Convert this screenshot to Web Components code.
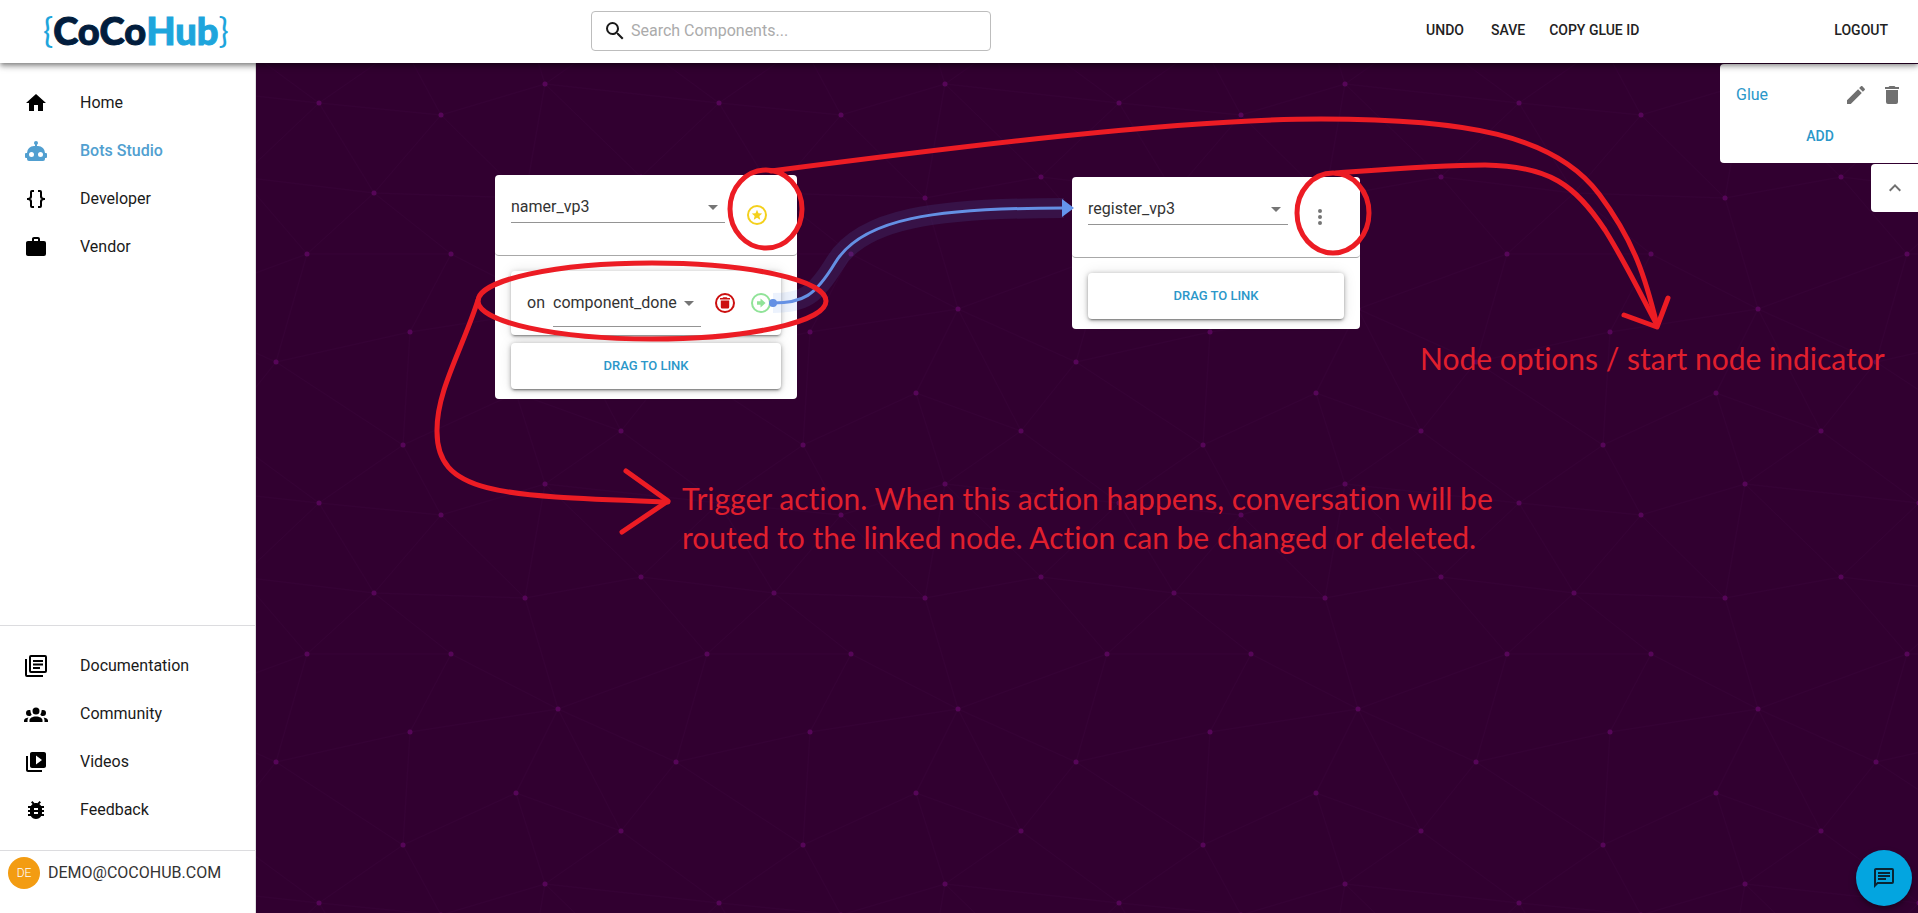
<!DOCTYPE html>
<html lang="en">
<head>
<meta charset="utf-8">
<title>CoCoHub – Bots Studio</title>
<style>
  html, body { margin: 0; }
  body { font: 16px/24px Roboto, "Liberation Sans", sans-serif; color: #222; background: #fff; }
</style>
</head>
<body>
<coco-app></coco-app>

<script>
const ICONS = {
  home: '<path d="M10 20v-6h4v6h5v-8h3L12 3 2 12h3v8z"/>',
  robot: '<path d="M12,2A2,2 0 0,1 14,4C14,4.74 13.6,5.39 13,5.73V7H14A7,7 0 0,1 21,14H22A1,1 0 0,1 23,15V18A1,1 0 0,1 22,19H21V20A2,2 0 0,1 19,22H5A2,2 0 0,1 3,20V19H2A1,1 0 0,1 1,18V15A1,1 0 0,1 2,14H3A7,7 0 0,1 10,7H11V5.73C10.4,5.39 10,4.74 10,4A2,2 0 0,1 12,2M7.5,13A2.5,2.5 0 0,0 5,15.5A2.5,2.5 0 0,0 7.5,18A2.5,2.5 0 0,0 10,15.5A2.5,2.5 0 0,0 7.5,13M16.5,13A2.5,2.5 0 0,0 14,15.5A2.5,2.5 0 0,0 16.5,18A2.5,2.5 0 0,0 19,15.5A2.5,2.5 0 0,0 16.5,13Z"/>',
  braces: '<path d="M8,3A2,2 0 0,0 6,5V9A2,2 0 0,1 4,11H3V13H4A2,2 0 0,1 6,15V19A2,2 0 0,0 8,21H10V19H8V14A2,2 0 0,0 6,12A2,2 0 0,0 8,10V5H10V3M16,3A2,2 0 0,1 18,5V9A2,2 0 0,0 20,11H21V13H20A2,2 0 0,0 18,15V19A2,2 0 0,1 16,21H14V19H16V14A2,2 0 0,1 18,12A2,2 0 0,1 16,10V5H14V3H16Z"/>',
  briefcase: '<path d="M10,2H14A2,2 0 0,1 16,4V6H20A2,2 0 0,1 22,8V19A2,2 0 0,1 20,21H4C2.89,21 2,20.1 2,19V8C2,6.89 2.89,6 4,6H8V4C8,2.89 8.89,2 10,2M14,6V4H10V6H14Z"/>',
  docs: '<g fill="none" stroke="currentColor" stroke-width="2"><rect x="6" y="2" width="16" height="16" rx="1"/><path d="M2 5V21Q2 22 3 22H19M9 7H19M9 10.500H19M9 14H16"/></g>',
  group: '<path d="M12,5.5A3.5,3.5 0 0,1 15.5,9A3.5,3.5 0 0,1 12,12.5A3.5,3.5 0 0,1 8.5,9A3.5,3.5 0 0,1 12,5.5M5,8C5.56,8 6.08,8.15 6.53,8.42C6.38,9.85 6.8,11.27 7.66,12.38C7.16,13.34 6.16,14 5,14A3,3 0 0,1 2,11A3,3 0 0,1 5,8M19,8A3,3 0 0,1 22,11A3,3 0 0,1 19,14C17.84,14 16.84,13.34 16.34,12.38C17.2,11.27 17.62,9.85 17.47,8.42C17.92,8.15 18.44,8 19,8M5.5,18.25C5.5,16.18 8.41,14.5 12,14.5C15.59,14.5 18.5,16.18 18.5,18.25V20H5.5V18.25M0,20V18.5C0,17.11 1.89,15.94 4.45,15.6C3.86,16.28 3.5,17.22 3.5,18.25V20H0M24,20H20.5V18.25C20.5,17.22 20.14,16.28 19.55,15.6C22.11,15.94 24,17.11 24,18.5V20Z"/>',
  video: '<path d="M4 6H2v14c0 1.100.9 2 2 2h14v-2H4V6zm16-4H8c-1.100 0-2 .9-2 2v12c0 1.100.9 2 2 2h12c1.100 0 2-.9 2-2V4c0-1.100-.9-2-2-2zm-8 12.500v-9l6 4.500-6 4.500z"/>',
  bug: '<path d="M20 8h-2.810c-.45-.78-1.070-1.450-1.820-1.960L17 4.410 15.590 3l-2.170 2.170C12.960 5.060 12.490 5 12 5c-.49 0-.96.06-1.410.17L8.410 3 7 4.410l1.620 1.630C7.880 6.550 7.260 7.220 6.810 8H4v2h2.090c-.05.33-.09.66-.09 1v1H4v2h2v1c0 .34.04.67.09 1H4v2h2.810c1.040 1.790 2.970 3 5.190 3s4.150-1.210 5.190-3H20v-2h-2.090c.05-.33.09-.66.09-1v-1h2v-2h-2v-1c0-.34-.04-.67-.09-1H20V8zm-6 8h-4v-2h4v2zm0-4h-4v-2h4v2z"/>',
  search: '<path d="M9.5,3A6.5,6.5 0 0,1 16,9.5C16,11.11 15.41,12.59 14.44,13.73L14.71,14H15.5L20.5,19L19,20.5L14,15.5V14.71L13.73,14.44C12.59,15.41 11.11,16 9.5,16A6.5,6.5 0 0,1 3,9.5A6.5,6.5 0 0,1 9.5,3M9.5,5C7,5 5,7 5,9.5C5,12 7,14 9.5,14C12,14 14,12 14,9.5C14,7 12,5 9.5,5Z"/>',
  pencil: '<path d="M20.71,7.04C21.1,6.65 21.1,6 20.71,5.63L18.37,3.29C18,2.9 17.35,2.9 16.96,3.29L15.12,5.12L18.87,8.87M3,17.25V21H6.75L17.81,9.93L14.06,6.18L3,17.25Z"/>',
  trash: '<path d="M19,4H15.5L14.5,3H9.5L8.5,4H5V6H19M6,19A2,2 0 0,0 8,21H16A2,2 0 0,0 18,19V7H6V19Z"/>',
  up: '<path d="M7.41,15.41L12,10.83L16.59,15.41L18,14L12,8L6,14L7.41,15.41Z"/>',
  dots: '<path d="M12,16A2,2 0 0,1 14,18A2,2 0 0,1 12,20A2,2 0 0,1 10,18A2,2 0 0,1 12,16M12,10A2,2 0 0,1 14,12A2,2 0 0,1 12,14A2,2 0 0,1 10,12A2,2 0 0,1 12,10M12,4A2,2 0 0,1 14,6A2,2 0 0,1 12,8A2,2 0 0,1 10,6A2,2 0 0,1 12,4Z"/>',
  star: '<circle cx="12" cy="12" r="9" fill="none" stroke="currentColor" stroke-width="2"/><path d="M12 6.800L13.500 10.300 17.200 10.600 14.400 13.100 15.200 16.700 12 14.800 8.800 16.700 9.600 13.100 6.800 10.600 10.500 10.300Z"/>',
  remove: '<circle cx="12" cy="12" r="9" fill="none" stroke="currentColor" stroke-width="2"/><path d="M7 7H9.500L10.300 6.200H13.700L14.500 7H17V8.600H7ZM7.800 9.400H16.200V16Q16.200 17.600 14.800 17.600H9.200Q7.800 17.600 7.800 16Z"/>',
  go: '<circle cx="12" cy="12" r="9" fill="none" stroke="currentColor" stroke-width="2"/><path d="M8 10.200H11.500V7.400L16.600 12 11.500 16.600V13.800H8Z"/>',
  caret: '<path d="M7 10l5 5 5-5z"/>',
  chat: '<path d="M20,2A2,2 0 0,1 22,4V16A2,2 0 0,1 20,18H6L2,22V4C2,2.89 2.9,2 4,2H20M4,4V17.17L5.17,16H20V4H4M6,6H18V8H6V6M6,9H18V11H6V9M6,12H14V14H6V12Z"/>'
};

function define(name, render) {
  customElements.define(name, class extends HTMLElement {
    connectedCallback() {
      if (this.shadowRoot) return;
      this.attachShadow({ mode: 'open' }).innerHTML = render(this);
    }
  });
}

define('coco-icon', el => `
  <style>
    :host { display: block; width: 24px; height: 24px; flex: none; }
    svg { display: block; width: 100%; height: 100%; fill: currentColor; }
  </style>
  <svg viewBox="0 0 24 24" aria-hidden="true">${ICONS[el.getAttribute('name')]}</svg>`);

define('coco-logo', () => `
  <style>
    :host { display: block; }
    a { display: flex; align-items: center; text-decoration: none; color: #021d3d;
        font: 900 38px/46px Lato, "Open Sans", sans-serif; -webkit-text-stroke: 1px currentColor; }
    .hub, .brace { color: #1ea5dc; }
    .brace { font-weight: 400; font-size: 34px; -webkit-text-stroke: 0; }
  </style>
  <a href="#"><span class="brace">{</span><span>CoCo</span><span class="hub">Hub</span><span class="brace">}</span></a>`);

define('coco-search', () => `
  <style>
    :host { display: block; }
    label { display: flex; align-items: center; gap: 4px; height: 40px; box-sizing: border-box;
            border: 1px solid #bdbdbd; border-radius: 4px; padding: 0 11px; color: #1a1a1a; }
    input { flex: 1; min-width: 0; border: 0; outline: 0; padding: 0; background: none; font: inherit; }
    input::placeholder { color: #ababab; opacity: 1; }
  </style>
  <label><coco-icon name="search"></coco-icon>
    <input type="search" placeholder="Search Components..." aria-label="Search Components"></label>`);

define('coco-text-button', () => `
  <style>
    :host { display: block; }
    button { display: block; border: 0; background: none; padding: 0; cursor: pointer; color: inherit;
             font: 500 14px/24px Roboto, sans-serif; text-transform: uppercase; white-space: nowrap; }
  </style>
  <button type="button"><slot></slot></button>`);

define('coco-icon-button', el => `
  <style>
    :host { display: block; }
    button { display: block; border: 0; background: none; padding: 0; cursor: pointer; color: inherit; }
  </style>
  <button type="button" aria-label="${el.getAttribute('label')}"><coco-icon name="${el.getAttribute('icon')}"></coco-icon></button>`);

define('coco-header', () => `
  <style>
    :host { display: grid; grid-template-columns: 591fr 400fr 927fr; align-items: center; height: 63px;
            box-sizing: border-box; padding-bottom: 1px; background: #fff; position: relative; z-index: 3;
            box-shadow: 0 2px 4px -1px rgba(0,0,0,.3), 0 4px 5px rgba(0,0,0,.2), 0 1px 10px rgba(0,0,0,.18); }
    coco-logo { padding: 0 0 2px 43px; }
    nav { display: flex; justify-content: flex-end; padding: 0 30px 2px 0; gap: 24px; }
    .undo { margin-right: 3px; }
    .logout { margin-left: 171px; }
  </style>
  <coco-logo></coco-logo>
  <coco-search></coco-search>
  <nav>
    <coco-text-button class="undo">Undo</coco-text-button>
    <coco-text-button>Save</coco-text-button>
    <coco-text-button>Copy Glue ID</coco-text-button>
    <coco-text-button class="logout">Logout</coco-text-button>
  </nav>`);

define('coco-nav-item', el => `
  <style>
    :host { display: block; color: #000; }
    :host([active]) { color: #519fd0; font-weight: 500; }
    a { display: flex; align-items: center; gap: 32px; height: 48px; padding-left: 24px;
        color: inherit; text-decoration: none; }
    span { color: #1a1a1a; }
    :host([active]) span { color: inherit; }
  </style>
  <a href="#"><coco-icon name="${el.getAttribute('icon')}"></coco-icon><span><slot></slot></span></a>`);

define('coco-sidebar', () => `
  <style>
    :host { display: flex; flex-direction: column; background: #fff; box-sizing: border-box; border-right: 1px solid #e0e0e0; }
    nav { padding: 16px 0; }
    .foot { margin-top: auto; border-top: 1px solid #dcdcdf; }
    .user { display: flex; align-items: flex-start; gap: 8px; height: 63px; box-sizing: border-box;
            padding: 6px 8px; border-top: 1px solid #dcdcdf; color: #333; }
    .avatar { width: 32px; height: 32px; border-radius: 50%; background: #f39c12; color: #fff;
              font-size: 12px; font-weight: 300; line-height: 32px; text-align: center; }
    .mail { line-height: 32px; }
  </style>
  <nav>
    <coco-nav-item icon="home">Home</coco-nav-item>
    <coco-nav-item icon="robot" active>Bots Studio</coco-nav-item>
    <coco-nav-item icon="braces">Developer</coco-nav-item>
    <coco-nav-item icon="briefcase">Vendor</coco-nav-item>
  </nav>
  <nav class="foot">
    <coco-nav-item icon="docs">Documentation</coco-nav-item>
    <coco-nav-item icon="group">Community</coco-nav-item>
    <coco-nav-item icon="video">Videos</coco-nav-item>
    <coco-nav-item icon="bug">Feedback</coco-nav-item>
  </nav>
  <div class="user"><span class="avatar">DE</span><span class="mail">DEMO@COCOHUB.COM</span></div>`);

define('coco-select', el => `
  <style>
    :host { display: grid; align-items: center; border-bottom: 1px solid #949494; color: #333; }
    select, coco-icon { grid-area: 1 / 1; }
    select { appearance: none; width: 100%; border: 0; outline: 0; background: none; padding: 0;
             color: inherit; font: inherit; height: 30px; }
    coco-icon { justify-self: end; color: #757575; pointer-events: none; }
  </style>
  <select aria-label="${el.getAttribute('label')}"><option>${el.getAttribute('value')}</option></select>
  <coco-icon name="caret"></coco-icon>`);

define('coco-drag-button', () => `
  <style>
    :host { display: block; }
    button { display: block; width: 100%; height: 46px; border: 0; border-radius: 4px; background: #fff;
             color: #2b97c9; font: 500 13px/24px Roboto, sans-serif; text-transform: uppercase; cursor: grab;
             box-shadow: 0 3px 1px -2px rgba(0,0,0,.2), 0 2px 2px rgba(0,0,0,.14), 0 1px 5px rgba(0,0,0,.3), 0 0 14px rgba(0,0,0,.1); }
  </style>
  <button type="button">Drag to link</button>`);

define('coco-trigger', el => `
  <style>
    :host { display: flex; height: 64px; box-sizing: border-box; padding: 0 8px 0 16px; border-radius: 4px;
            background: #fff; align-items: center;
            box-shadow: 0 3px 1px -2px rgba(0,0,0,.2), 0 2px 2px rgba(0,0,0,.14), 0 1px 5px rgba(0,0,0,.2), 0 0 14px rgba(0,0,0,.1); }
    .on { width: 26px; color: #333; }
    coco-select { width: 148px; padding: 8px 0; }
    .remove { margin-left: 12px; color: #cc0f0f; }
    .go { margin-left: 12px; color: #90e398; }
  </style>
  <span class="on">on</span>
  <coco-select label="Action" value="${el.getAttribute('action')}"></coco-select>
  <coco-icon-button class="remove" icon="remove" label="Delete action"></coco-icon-button>
  <coco-icon-button class="go" icon="go" label="Linked"></coco-icon-button>`);

define('coco-node', el => `
  <style>
    :host { display: block; border-radius: 4px; background: #fff; }
    header { display: flex; align-items: flex-start; height: 81px; box-sizing: border-box; padding: 17px 28px 0 16px;
             border-bottom: 1px solid #a8a8a8; border-radius: 4px; }
    coco-select { flex: 1; }
    .opt { margin: 11px 0 0 20px; color: #757575; }
    .opt.star { color: #f4d01c; }
    .body { display: flex; flex-direction: column; gap: 8px; padding: 15px 16px 10px; }
  </style>
  <header>
    <coco-select label="Component" value="${el.getAttribute('value')}"></coco-select>
    <coco-icon-button class="opt ${el.getAttribute('icon')}" icon="${el.getAttribute('icon')}" label="Node options"></coco-icon-button>
  </header>
  <div class="body"><slot></slot><coco-drag-button></coco-drag-button></div>`);

define('coco-glue-panel', () => `
  <style>
    :host { display: flex; flex-direction: column; align-items: flex-end; gap: 1px; }
    section { width: 198px; height: 99px; box-sizing: border-box; padding: 19px 14px 0 16px; background: #fff; border-radius: 4px 0 0 4px; color: #2b97c9; }
    .row { display: flex; align-items: center; gap: 12px; }
    .row a { flex: 1; color: inherit; text-decoration: none; }
    .row coco-icon-button { color: #707070; }
    .add { display: flex; justify-content: center; padding-top: 17px; }
    .toggle { display: grid; place-items: center; width: 47px; height: 48px; background: #fff; border-radius: 4px 0 0 4px; color: #707070; }
  </style>
  <section>
    <div class="row"><a href="#">Glue</a>
      <coco-icon-button icon="pencil" label="Rename"></coco-icon-button>
      <coco-icon-button icon="trash" label="Delete"></coco-icon-button></div>
    <div class="add"><coco-text-button>Add</coco-text-button></div>
  </section>
  <div class="toggle"><coco-icon-button icon="up" label="Collapse"></coco-icon-button></div>`);

/* Faint constellation that repeats every 400px behind the nodes. */
const STARS = { A:[63,40],B:[185,52],C:[289,21],D:[118,130],E:[269,135],F:[51,191],G:[195,191],H:[154,269],
                I:[20,299],J:[260,330],K:[147,382],L:[365,368],M:[385,114],N:[302,246] };
const EDGES = ['AB','BC','AD','BD','BE','CE','FG','DF','DG','DE','GH','GN','FI','HI','HK','IK','KJ','JL','JN','HN','NE','NL','EM','CM'];
const WRAPS = [[385,114,451,191],[385,114,463,40],[385,114,518,130],[365,368,420,299],[302,246,420,299],
               [147,382,63,440],[147,382,185,452],[365,368,289,421],[365,368,463,440],[260,330,289,421],[289,21,463,40],[302,246,451,191]];
function sky() {
  let s = '';
  const line = (a, b, c, d) => { s += `<path d="M${a} ${b}L${c} ${d}"/>`; };
  EDGES.forEach(e => line(...STARS[e[0]], ...STARS[e[1]]));
  WRAPS.forEach(([a, b, c, d]) => [[0, 0], [-400, 0], [0, -400], [-400, -400]].forEach(([x, y]) => line(a + x, b + y, c + x, d + y)));
  const dots = Object.values(STARS).map(([x, y]) => `<circle cx="${x}" cy="${y}" r="2.500"/>`).join('');
  return `<g stroke="#350235" stroke-width="1">${s}</g><g fill="#560558">${dots}</g>`;
}

define('coco-canvas', () => `
  <style>
    :host { display: block; position: relative; overflow: hidden; background: #310030; }
    svg { position: absolute; inset: 0; width: 100%; height: 100%; pointer-events: none; }
    coco-node { position: absolute; }
    .namer { left: 239px; top: 112px; width: 302px; }
    .register { left: 816px; top: 114px; width: 288px; }
    coco-glue-panel { position: absolute; right: 0; top: 1px; }
    .note { position: absolute; margin: 0; color: #e01f2d; font: 30px/39px Lato, Carlito, sans-serif;
            font-variant-ligatures: none; white-space: nowrap; }
    .options { left: 1164px; top: 276px; }
    .trigger { left: 426px; top: 416px; }
  </style>
  <svg><defs><pattern id="sky" width="400" height="400" patternUnits="userSpaceOnUse">${sky()}</pattern></defs>
    <rect width="100%" height="100%" fill="url(#sky)"/></svg>
  <coco-node class="namer" value="namer_vp3" icon="star"><coco-trigger action="component_done"></coco-trigger></coco-node>
  <coco-node class="register" value="register_vp3" icon="dots"></coco-node>
  <svg aria-hidden="true">
    <g transform="translate(-256 -63)" fill="none" stroke-linecap="round" stroke-linejoin="round">
      <path d="M773 303C803 303 815 296 835 263C862 218 935 208 1064 208" stroke="#6495ed" stroke-opacity=".12" stroke-width="20" stroke-linecap="butt"/>
      <path d="M773 303C803 303 815 296 835 263C862 218 935 208 1064 208" stroke="#6490e4" stroke-width="3"/>
      <circle cx="773" cy="303" r="4" fill="#6490e4"/>
      <path d="M1062 199L1074 208L1062 217Z" fill="#6495ed"/>
      <g stroke="#ec1c24" stroke-width="5">
        <ellipse cx="766" cy="209" rx="36" ry="39"/>
        <ellipse cx="652" cy="301" rx="174" ry="38"/>
        <ellipse cx="1333" cy="213" rx="36" ry="40"/>
        <path d="M771 171C956 147 1180 119 1321 119C1465 119 1555 135 1599 194C1635 242 1646 280 1657 325"/>
        <path d="M1336 173C1390 169 1440 165 1485 165C1550 166 1575 185 1605 230C1625 262 1640 293 1657 325"/>
        <path d="M1624 315L1657 327L1668 298"/>
        <path d="M478 300C462 350 437 390 437 430C436 495 500 496 668 502"/>
        <path d="M626 471L668 501L622 532"/>
      </g>
    </g>
  </svg>
  <p class="note options">Node options / start node indicator</p>
  <p class="note trigger">Trigger action. When this action happens, conversation will be<br>routed to the linked node. Action can be changed or deleted.</p>
  <coco-glue-panel></coco-glue-panel>`);

define('coco-chat-button', () => `
  <style>
    :host { position: fixed; right: 6px; bottom: 7px; z-index: 4; display: block; }
    button { display: grid; place-items: center; width: 56px; height: 56px; padding: 0; border: 0; border-radius: 50%;
             background: #03a5e0; color: #0a2533; box-shadow: 0 3px 5px -1px rgba(0,0,0,.3), 0 4px 8px rgba(0,0,0,.2); }
  </style>
  <button type="button" aria-label="Open chat"><coco-icon name="chat"></coco-icon></button>`);

define('coco-app', () => `
  <style>
    :host { display: grid; grid-template: auto 1fr / 256px 1fr; min-height: 100vh; }
    coco-header { grid-column: 1 / -1; }
  </style>
  <coco-header></coco-header>
  <coco-sidebar></coco-sidebar>
  <coco-canvas></coco-canvas>
  <coco-chat-button></coco-chat-button>`);
</script>
</body>
</html>
